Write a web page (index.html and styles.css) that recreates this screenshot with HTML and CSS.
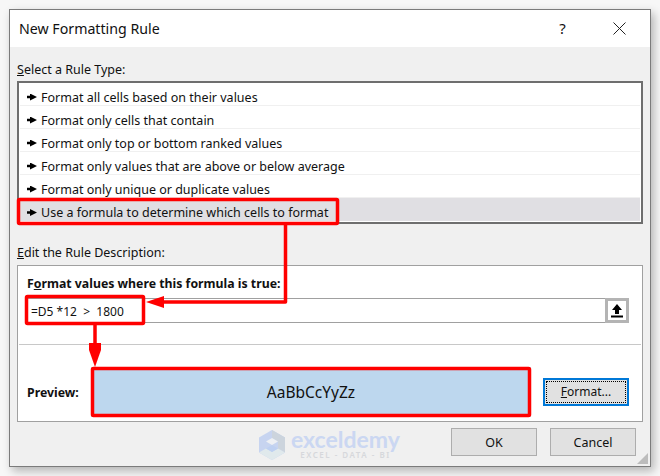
FILE: index.html
```html
<!DOCTYPE html>
<html lang="en">
<head>
    <meta charset="UTF-8">
    <title>New Formatting Rule</title>
    <link rel="stylesheet" href="styles.css">
</head>
<body>
    <div class="dialog">
        <div class="title-bar">
            <span class="title">New Formatting Rule</span>
            <span class="help">?</span>
            <svg class="close" width="13" height="13" viewBox="0 0 13 13"><path d="M0.5 0.5L12.5 12.5M12.5 0.5L0.5 12.5" stroke="#222" fill="none"/></svg>
        </div>

        <div class="content">
            <div class="group-label"><u>S</u>elect a Rule Type:</div>
            <ul class="rule-list">
                <li><span class="marker"></span>Format all cells based on their values</li>
                <li><span class="marker"></span>Format only cells that contain</li>
                <li><span class="marker"></span>Format only top or bottom ranked values</li>
                <li><span class="marker"></span>Format only values that are above or below average</li>
                <li><span class="marker"></span>Format only unique or duplicate values</li>
                <li class="selected"><span class="marker"></span>Use a formula to determine which cells to format</li>
            </ul>

            <div class="group-label edit-label"><u>E</u>dit the Rule Description:</div>
            <div class="edit-box">
                <div class="formula-title">F<u>o</u>rmat values where this formula is true:</div>
                <div class="formula-row">
                    <div class="formula-input">=D5 *12 &nbsp;&gt; &nbsp;1800</div>
                    <div class="collapse-btn">
                        <svg width="14" height="15" viewBox="0 0 14 15"><path d="M7 1L12 7H9V11H5V7H2Z" fill="#000"/><rect x="1" y="12.500" width="12" height="2" fill="#000"/></svg>
                    </div>
                </div>
                <div class="divider"></div>
                <div class="preview-row">
                    <span class="preview-label">Preview:</span>
                    <div class="preview-box">AaBbCcYyZz</div>
                    <button class="format-btn"><span class="format-inner"><u>F</u>ormat...</span></button>
                </div>
            </div>

            <div class="actions">
                <button class="action-btn">OK</button>
                <button class="action-btn">Cancel</button>
            </div>
        </div>

        <div class="grip"></div>
    </div>

    <!-- watermark -->
    <div class="watermark">
        <svg width="28" height="32" viewBox="0 0 28 32">
            <path d="M14 1L27 8.500V23.500L14 31L1 23.500V8.500Z" fill="#c3d2f0"/>
            <path d="M14 1L27 8.500V23.500L20 19.500V12.500L14 9Z" fill="#c9d2dc"/>
            <path d="M1 23.500L14 31L27 23.500L20 19.500L14 23L8 19.500Z" fill="#dfe9ec"/>
            <path d="M8 12.500L14 9L20 12.500L14 16Z" fill="#eef1f5"/>
            <path d="M8 19.500L14 16L20 19.500L14 23Z" fill="#b9cdf2"/>
        </svg>
        <div class="wm-text">
            <div class="wm-name">exceldemy</div>
            <div class="wm-tag">EXCEL - DATA - BI</div>
        </div>
    </div>

    <!-- red callouts drawn on top of the screenshot -->
    <svg class="callouts" width="660" height="476" viewBox="0 0 660 476">
        <g fill="none" stroke="#f00" stroke-width="3.500" stroke-linejoin="round">
            <rect x="18.500" y="199.500" width="319" height="24" rx="1"/>
            <rect x="26.500" y="296.500" width="117" height="27" rx="1"/>
            <rect x="92.500" y="368.500" width="437" height="47" rx="1"/>
            <path d="M285.500 225V302H160"/>
            <path d="M95 325V346"/>
        </g>
        <path d="M146 302L164 296V308Z" fill="#f00"/>
        <path d="M95 367L89 350V343H101V350Z" fill="#f00"/>
    </svg>
</body>
</html>
```

FILE: styles.css
```css
* {
    box-sizing: border-box;
}

body {
    margin: 0;
    width: 660px;
    height: 476px;
    padding: 9px;
    background-color: #f7f7f7;
    font-family: "Noto Sans", "Open Sans", sans-serif;
    font-size: 12.500px;
    color: #111;
    overflow: hidden;
    position: relative;
}

.dialog {
    width: 642px;
    height: 458px;
    border: 1px solid #7b7b7b;
    background-color: #f0f0f0;
    box-shadow: 3px 4px 9px rgba(0, 0, 0, 0.28);
    position: relative;
}

/* title bar */
.title-bar {
    height: 37px;
    background-color: #fff;
    display: flex;
    align-items: center;
    padding-left: 9px;
}

.title {
    font-size: 14.200px;
    flex: 1;
    margin-top: -1px;
}

.help {
    font-size: 15px;
    width: 15px;
    margin-right: 43px;
    margin-top: -2px;
    text-align: center;
}

.close {
    margin-right: 24px;
}

.content {
    padding: 0 7px;
}

.group-label {
    height: 34px;
    padding-top: 14px;
    line-height: 18px;
}

/* rule type list */
.rule-list {
    list-style: none;
    margin: 0;
    padding: 0 1px 1px;
    height: 143px;
    border: 2px solid #6e6e6e;
    background-color: #fff;
}

.rule-list li {
    height: 23px;
    padding: 6px 0 0 7px;
    display: flex;
    align-items: center;
    border-bottom: 1px solid #f0f0f0;
}

.rule-list li.selected {
    background-color: #e0dfe3;
    border-bottom: none;
}

.marker {
    width: 10px;
    height: 7px;
    margin-right: 4px;
    background-color: #000;
    clip-path: polygon(0 32%, 30% 32%, 30% 0, 100% 50%, 30% 100%, 30% 68%, 0 68%);
}

.edit-label {
    height: 41px;
    padding-top: 20px;
}

/* rule description */
.edit-box {
    height: 157px;
    border: 1px solid #a0a0a0;
    background-color: #fff;
}

.formula-title {
    height: 32px;
    padding: 9px 0 0 9px;
    line-height: 17px;
    font-size: 12.300px;
    font-weight: 700;
}

.formula-row {
    display: flex;
    height: 25px;
    margin: 0 13px 0 0;
    padding-left: 9px;
}

.formula-input {
    flex: 1;
    border: 1px solid #a0a0a0;
    border-left: none;
    border-right: none;
    padding-left: 4px;
    line-height: 25px;
    font-size: 12px;
}

.collapse-btn {
    width: 24px;
    border: 3px solid #b4b4b4;
    background-color: #fff;
    display: flex;
    align-items: center;
    justify-content: center;
}

.divider {
    height: 1px;
    margin: 21px 1px 0;
    background-color: #c8c8c8;
}

.preview-row {
    display: flex;
    align-items: center;
    height: 50px;
    margin-top: 22px;
    padding-left: 9px;
}

.preview-label {
    width: 64px;
    font-size: 12.300px;
    font-weight: 700;
}

.preview-box {
    width: 440px;
    height: 50px;
    background-color: #bdd7ee;
    font-size: 15.500px;
    display: flex;
    align-items: center;
    justify-content: center;
}

.format-btn {
    width: 86px;
    height: 28px;
    margin: 0 0 1px 12px;
    padding: 1px;
    border: 2px solid #0078d7;
    background-color: #e1e1e1;
    font: inherit;
    font-size: 12px;
    color: inherit;
}

.format-inner {
    display: block;
    height: 100%;
    line-height: 20px;
    border: 1px dotted #000;
}

.actions {
    display: flex;
    justify-content: flex-end;
    gap: 13px;
    padding: 6px 7px 0 0;
}

.action-btn {
    width: 86px;
    height: 28px;
    border: 1px solid #adadad;
    background-color: #e1e1e1;
    font: inherit;
    font-size: 12.500px;
    color: inherit;
}

/* resize handle in the corner */
.grip {
    position: absolute;
    right: 2px;
    bottom: 2px;
    width: 11px;
    height: 11px;
    background-color: #bcbcbc;
    clip-path: polygon(100% 0, 100% 100%, 0 100%);
}

.watermark {
    position: absolute;
    left: 258px;
    top: 429px;
    display: flex;
    gap: 5px;
    opacity: 0.9;
}

.wm-text {
    line-height: 1;
}

.wm-name {
    font-family: "Lato", sans-serif;
    font-weight: 700;
    font-size: 23px;
    line-height: 21px;
    color: #c7d5f3;
}

.wm-tag {
    font-size: 8px;
    line-height: 10px;
    letter-spacing: 1.500px;
    font-weight: 600;
    text-align: center;
    color: #d4d6da;
}

.callouts {
    position: absolute;
    left: 0;
    top: 0;
    pointer-events: none;
}
```
